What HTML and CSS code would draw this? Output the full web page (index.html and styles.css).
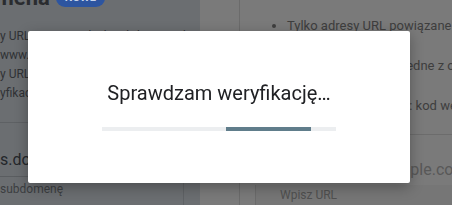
FILE: index.html
```
<!DOCTYPE html>
<html lang="pl">
<head>
  <meta charset="UTF-8" />
  <meta name="viewport" content="width=device-width, initial-scale=1.0"/>
  <title>Dodaj usługę</title>
  <link rel="stylesheet" href="styles.css">
</head>
<body>
  <div class="strona">
    <section class="kol-domena">
      <div class="naglowek">
        <h2>Domena</h2>
        <span class="plakietka">NOWE</span>
      </div>
      <div class="opis">
        <div>y URL we wszystkich subdomenach</div>
        <div>www.example.com</div>
        <div>y URL z każdym protokołem</div>
        <div>yfikacja przez rekord DNS</div>
      </div>
      <div class="pole">s.domena.pl</div>
      <div class="pomoc">subdomenę</div>
    </section>
    <section class="kol-prefiks">
      <div class="szyna"></div>
      <div class="tresc">
        <ul class="lista">
          <li>Tylko adresy URL powiązane z prefiksem</li>
          <li>Obsługiwane są też jedne z opcji</li>
          <li>Obsługuje wiele opcji: kod weryfikacyjny</li>
        </ul>
        <div class="pole-url">https://www.example.com</div>
        <div class="wiersz-dol">
          <span>Wpisz URL</span>
        </div>
      </div>
    </section>
  </div>

  <div class="dialog">
    <p class="dialog-tekst">Sprawdzam weryfikację…</p>
    <div class="postep"><div class="postep-pasek"></div></div>
  </div>
</body>
</html>
```

FILE: styles.css
```
body {
  margin: 0;
  width: 452px;
  height: 205px;
  overflow: hidden;
  font-family: Roboto, 'Liberation Sans', sans-serif;
  background-color: #7a7a7a;
}

.strona {
  display: flex;
  height: 205px;
}

.kol-domena {
  width: 200px;
  flex-shrink: 0;
  background-color: #6b6e71;
  color: #2c2e31;
  overflow: hidden;
}

.naglowek {
  display: flex;
  align-items: center;
  gap: 6px;
  height: 24px;
  margin: -14px 0 0 -32px;
}

.naglowek h2 {
  margin: 0;
  font-size: 22px;
  line-height: 24px;
  font-weight: 700;
  color: #2a2c2f;
}

.plakietka {
  display: inline-block;
  height: 18px;
  padding: 0 9px;
  border-radius: 9px;
  background-color: #2d55a0;
  color: #c6d3ec;
  font-size: 11px;
  line-height: 18px;
  font-weight: 700;
}

.opis {
  margin-top: 17px;
  font-size: 12px;
  line-height: 19px;
  color: #303235;
  white-space: nowrap;
  padding-bottom: 19px;
  border-bottom: 1px solid #5e6164;
}

.pole {
  margin-top: 27px;
  width: 183px;
  font-size: 16px;
  line-height: 20px;
  color: #24272b;
  padding-bottom: 6px;
  border-bottom: 1px solid #5a5d60;
  border-right: 1px solid #5f6265;
}

.pomoc {
  margin-top: 4px;
  width: 183px;
  font-size: 12px;
  line-height: 16px;
  color: #3c3e41;
  border-right: 1px solid #5f6265;
  height: 30px;
}

.kol-prefiks {
  flex: 1;
  display: flex;
  background-color: #7a7a7a;
}

.szyna {
  width: 39px;
  border-right: 1px solid #6b6b6b;
}

.tresc {
  flex: 1;
  display: flex;
  flex-direction: column;
  overflow: hidden;
}

.lista {
  margin: 16px 0 0;
  padding: 0 0 18px 47px;
  font-size: 13px;
  line-height: 20px;
  color: #3e3e3e;
  white-space: nowrap;
  border-bottom: 1px solid #6c6c6c;
}

.lista li + li {
  margin-top: 20px;
}

.pole-url {
  margin-top: 25px;
  padding-left: 40px;
  font-size: 16px;
  line-height: 20px;
  color: #585858;
  white-space: nowrap;
}

.wiersz-dol {
  flex: 1;
  margin-top: 5px;
  margin-left: 15px;
  padding-left: 24px;
  border-left: 1px solid #6b6b6b;
  background-color: #767676;
  font-size: 12px;
  line-height: 16px;
  color: #505050;
  display: flex;
  align-items: center;
}

.dialog {
  position: fixed;
  left: 28px;
  top: 31px;
  width: 382px;
  height: 152px;
  box-sizing: border-box;
  padding-top: 50px;
  background-color: #fff;
  border-radius: 2px;
  box-shadow: 0 4px 14px rgba(0, 0, 0, 0.3);
}

.dialog-tekst {
  margin: 0;
  text-align: center;
  font-size: 20px;
  line-height: 24px;
  color: #202124;
}

.postep {
  margin: 22px 74px 0;
  height: 4px;
  background-color: #eceef0;
}

.postep-pasek {
  margin-left: 124px;
  width: 85px;
  height: 4px;
  background-color: #607d8b;
}
```
